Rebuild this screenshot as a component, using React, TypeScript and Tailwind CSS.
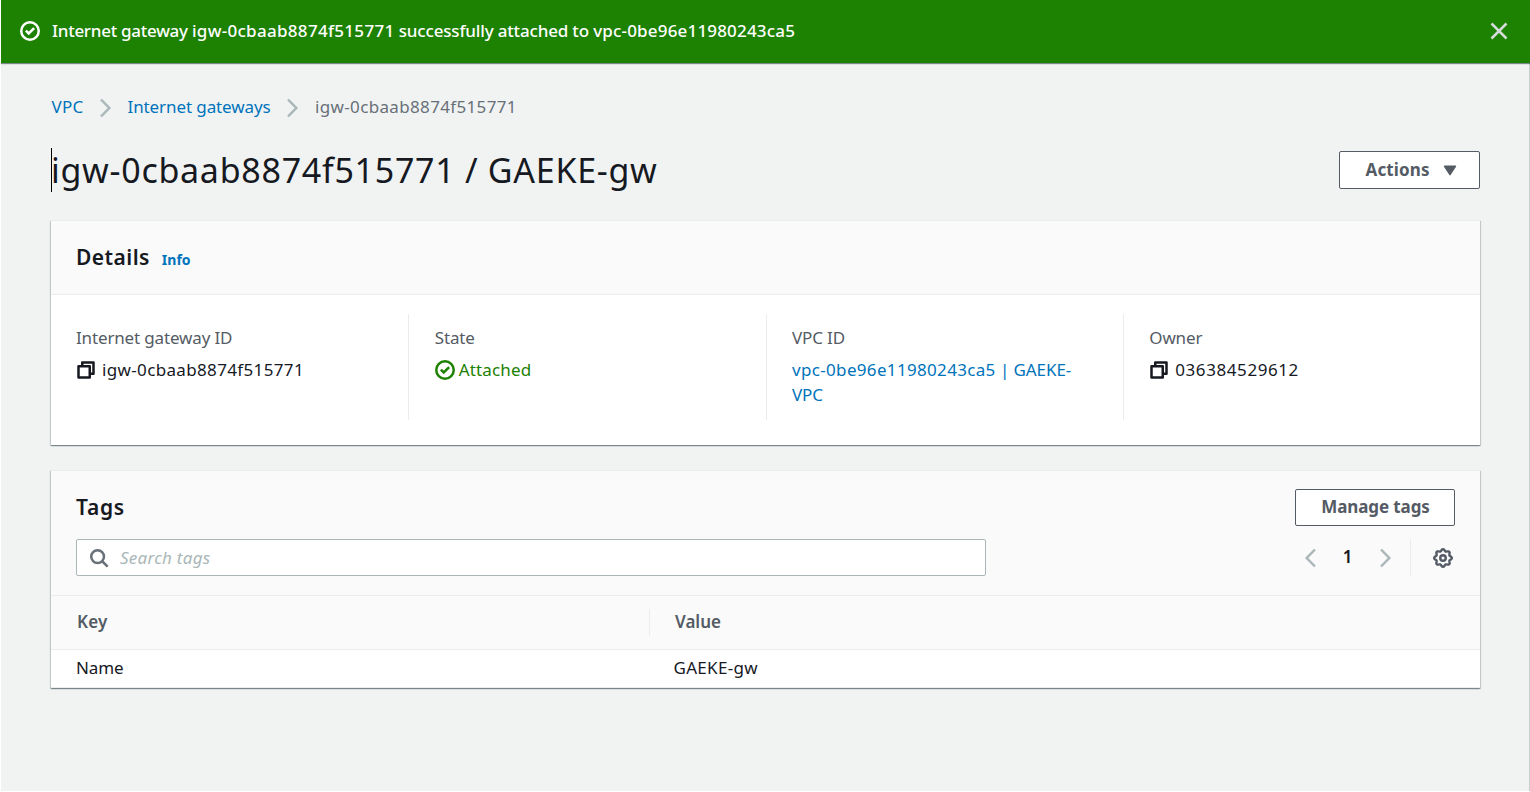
import type { ReactNode } from 'react';

function CheckCircle({ className = '' }: { className?: string }) {
  return (
    <svg viewBox="0 0 16 16" className={`size-5 shrink-0 ${className}`} fill="none" stroke="currentColor" strokeWidth="2">
      <circle cx="8" cy="8" r="7" />
      <path d="M4.7 7.7 7 10l4.3-4.3" />
    </svg>
  );
}

function Chevron({ className = '' }: { className?: string }) {
  return (
    <svg viewBox="0 0 20 20" className={`size-5 shrink-0 text-[#aab7b8] ${className}`} fill="none" stroke="currentColor" strokeWidth="2.5">
      <path d="M6 1.5 14.3 10 6 18.5" />
    </svg>
  );
}

function CopyIcon() {
  return (
    <svg viewBox="0 0 16 16" className="size-5 shrink-0" fill="none" stroke="currentColor" strokeWidth="2" strokeLinejoin="round">
      <path d="M2 5h9v9H2z" />
      <path d="M5 5V2h9v9h-3" />
    </svg>
  );
}

function SearchIcon() {
  return (
    <svg viewBox="0 0 20 20" className="size-5 shrink-0 text-[#687078]" fill="none" stroke="currentColor" strokeWidth="2.5">
      <circle cx="8.6" cy="8.6" r="6.4" />
      <path d="m13 13 5.6 5.6" />
    </svg>
  );
}

// Gear outline: a ring whose radius ripples through eight lobes.
const gearPoints = Array.from({ length: 96 }, (_, i) => {
  const a = (i / 96) * Math.PI * 2;
  const r = 7.9 + 0.95 * Math.cos(8 * a);
  return `${(10 + r * Math.sin(a)).toFixed(2)},${(10 - r * Math.cos(a)).toFixed(2)}`;
}).join(' ');

function GearIcon() {
  return (
    <svg viewBox="0 0 20 20" className="size-5 shrink-0 text-[#545b64]" fill="none" stroke="currentColor" strokeWidth="2.4">
      <polygon points={gearPoints} strokeLinejoin="round" />
      <circle cx="10" cy="10" r="2.75" />
    </svg>
  );
}

function Panel({ children }: { children: ReactNode }) {
  return (
    <section className="border-t border-[#eaeded] bg-white shadow-[0_1px_1px_0_rgba(0,28,36,0.3),1px_1px_1px_0_rgba(0,28,36,0.15),-1px_1px_1px_0_rgba(0,28,36,0.15)]">
      {children}
    </section>
  );
}

function Field({ label, children, first = false }: { label: string; children: ReactNode; first?: boolean }) {
  return (
    <div className={`h-[106px] pt-[11px] ${first ? 'pl-[25px]' : 'border-l border-[#eaeded] pl-[25.5px]'}`}>
      <div className="tracking-[-0.15px] text-[#545b64]">{label}</div>
      <div className="mt-[7px]">{children}</div>
    </div>
  );
}

export default function App() {
  return (
    <div className="h-[792px] w-[1530px] overflow-hidden border-b border-l border-white bg-[#f1f3f3] font-['Noto_Sans','Open_Sans',sans-serif] text-[17px] leading-[25px] text-[#16191f]">
      <div className="h-[791px] border-r border-[#c8cccc]">
        <header className="-mr-px flex h-[63px] items-center bg-[#1d8102] pr-[21px] pb-px pl-[19px] text-white shadow-[0_1px_1px_0_rgba(0,28,36,0.5)]">
          <CheckCircle />
          <p className="ml-3 pb-[2px] font-medium tracking-[-0.27px]">
            Internet gateway <span className="tracking-[0.3px]">igw-0cbaab8874f515771</span>
            <span className="tracking-[-0.17px]"> successfully attached to </span>
            <span className="tracking-[0.18px]">vpc-0be96e11980243ca5</span>
          </p>
          <button className="ml-auto text-[#d5dbdb]" aria-label="Dismiss">
            <svg viewBox="0 0 16 16" className="size-5" fill="none" stroke="currentColor" strokeWidth="2">
              <path d="m2 2 12 12M14 2 2 14" />
            </svg>
          </button>
        </header>

        <main className="pt-[31px] pr-[49px] pl-[50px]">
          <nav className="flex h-[25px] items-center">
            <a className="ml-[0.5px] tracking-[0.26px] text-[#0073bb]">VPC</a>
            <Chevron className="mt-[3px] ml-[11.5px]" />
            <a className="ml-[12.5px] tracking-[-0.1px] text-[#0073bb]">Internet gateways</a>
            <Chevron className="mt-[3px] ml-[11.5px]" />
            <span className="ml-[13px] tracking-[0.34px] text-[#687078]">igw-0cbaab8874f515771</span>
          </nav>

          <div className="mt-8 flex h-[38px] items-start justify-between">
            <h1 className="relative text-[34px] leading-[38px] tracking-[0.72px]">
              igw-0cbaab8874f515771 / GAEKE-gw
              <span className="absolute -top-[3px] left-0 h-11 w-px bg-black" />
            </h1>
            <button className="flex h-[38px] w-[141px] items-center rounded-[2px] border border-[#545b64] bg-white pb-px pl-[25.5px] font-bold tracking-[0.15px] text-[#545b64]">
              Actions
              <svg viewBox="0 0 20 20" className="ml-[10px] size-5" fill="currentColor" stroke="currentColor" strokeWidth="1.5" strokeLinejoin="round">
                <path d="M4.6 6.3h10.8L10 14.6z" />
              </svg>
            </button>
          </div>

          <div className="mt-[31px] flex flex-col gap-[25px]">
            <Panel>
              <div className="flex h-[74px] items-center border-b border-[#eaeded] bg-[#fafafa] pl-[25px]">
                <div className="flex items-baseline pt-px">
                  <h2 className="text-[21px] font-semibold tracking-[0.45px]">Details</h2>
                  <a className="ml-3 text-[14px] font-bold text-[#0073bb]">Info</a>
                </div>
              </div>
              <div className="grid grid-cols-4 pt-[19px] pb-[25px]">
                <Field label="Internet gateway ID" first>
                  <div className="flex items-center gap-[6px]">
                    <CopyIcon />
                    <span className="tracking-[0.35px]">igw-0cbaab8874f515771</span>
                  </div>
                </Field>
                <Field label="State">
                  <div className="flex items-center gap-1 text-[#1d8102]">
                    <CheckCircle />
                    <span className="tracking-[0.15px]">Attached</span>
                  </div>
                </Field>
                <Field label="VPC ID">
                  <a className="tracking-[-0.1px] text-[#0073bb]">
                    <span className="tracking-[0.33px]">vpc-0be96e11980243ca5</span> | GAEKE-
                    <br />
                    VPC
                  </a>
                </Field>
                <Field label="Owner">
                  <div className="flex items-center gap-[6px]">
                    <CopyIcon />
                    <span className="tracking-[0.58px]">036384529612</span>
                  </div>
                </Field>
              </div>
            </Panel>

            <Panel>
              <div className="border-b border-[#eaeded] bg-[#fafafa] px-[25px] pt-[18px] pb-[19px]">
                <div className="flex h-[37px] items-center justify-between">
                  <h2 className="pb-px text-[21px] font-semibold tracking-[0.7px]">Tags</h2>
                  <button className="h-[37px] w-40 rounded-[2px] border border-[#545b64] bg-white pb-[2px] pl-px font-bold tracking-[-0.1px] text-[#545b64]">
                    Manage tags
                  </button>
                </div>
                <div className="mt-[13px] flex h-[37px] items-center">
                  <label className="flex h-[37px] w-[910px] items-center rounded-[2px] border border-[#aab7b8] bg-white pl-3">
                    <SearchIcon />
                    <span className="ml-[11px] pb-px tracking-[0.25px] text-[#aab7b8] italic">Search tags</span>
                  </label>
                  <div className="ml-auto flex h-[37px] items-center">
                    <Chevron className="rotate-180" />
                    <span className="w-[54px] pb-[2px] text-center font-semibold">1</span>
                    <Chevron />
                    <span className="ml-[15.5px] h-[37px] w-px bg-[#eaeded]" />
                    <span className="mr-[2px] ml-[22px]">
                      <GearIcon />
                    </span>
                  </div>
                </div>
              </div>
              <div className="flex h-[54px] items-center border-b border-[#eaeded] bg-[#fafafa] font-semibold text-[#545b64]">
                <div className="w-[598px] pb-[2px] pl-[26px] tracking-[0.2px]">Key</div>
                <div className="h-[27px] w-px bg-[#eaeded]" />
                <div className="pb-[2px] pl-[25px]">Value</div>
              </div>
              <div className="flex h-[38px] items-center border-b border-[#eaeded]">
                <div className="w-[598px] pb-[3px] pl-[25px] tracking-[-0.15px]">Name</div>
                <div className="pb-[3px] pl-[24.5px] tracking-[0.3px]">GAEKE-gw</div>
              </div>
            </Panel>
          </div>
        </main>
      </div>
    </div>
  );
}
